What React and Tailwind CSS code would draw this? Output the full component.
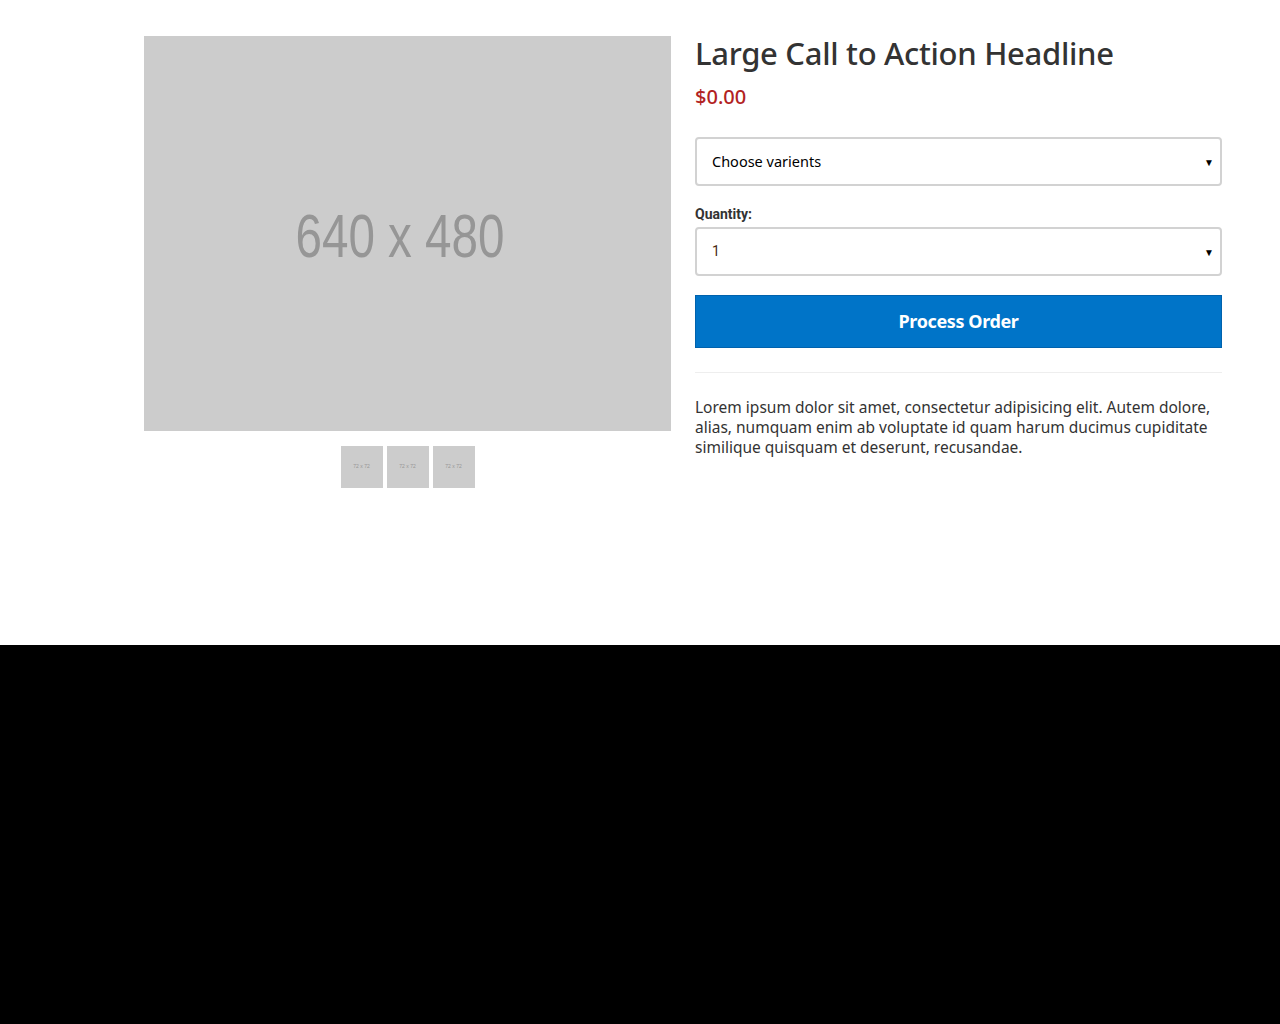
import React from 'react'

const thumbs = [0, 1, 2]

function FakeSelect({ label, className = '' }) {
  return (
    <div className="flex h-[49px] w-full items-center justify-between rounded-[4px] border-2 border-[#d2d2d2] bg-white pl-[15px] pr-[6px]">
      <span className={className}>{label}</span>
      <span className="text-[10px] leading-none text-black">▼</span>
    </div>
  )
}

export default function App() {
  return (
    <div className="min-h-[1024px] bg-black font-['Noto_Sans',sans-serif]">
      <div className="h-[645px] bg-white pt-[36px]">
        <div className="ml-[144px] flex w-[1078px] gap-[24px]">
          <div className="w-[527px]">
            <div className="flex h-[395px] items-center justify-center bg-[#cccccc] pr-[15px] pt-[6px]">
              <span className="inline-block scale-x-[0.78] font-['Liberation_Sans',sans-serif] text-[61px] leading-none text-[#969696]">
                640 x 480
              </span>
            </div>
            <div className="mt-[15px] flex justify-center gap-[4px]">
              {thumbs.map((t) => (
                <div key={t} className="flex h-[42px] w-[42px] items-center justify-center bg-[#cccccc]">
                  <span className="font-['Liberation_Sans',sans-serif] text-[5px] text-[#969696]">72 x 72</span>
                </div>
              ))}
            </div>
          </div>

          <div className="w-[527px]">
            <h1 className="mt-[-4px] text-[31px] font-medium leading-[42px] tracking-[-0.3px] text-[#333333]">
              Large Call to Action Headline
            </h1>
            <p className="mt-[11px] text-[20px] font-medium leading-[24px] text-[#b22222]">$0.00</p>

            <div className="mt-[28px]">
              <FakeSelect label="Choose varients" className="text-[14.5px] text-black" />
            </div>

            <label className="mt-[19px] block font-['Roboto',sans-serif] text-[14px] font-bold leading-[18px] text-[#333333]">
              Quantity:
            </label>
            <div className="mt-[4px]">
              <FakeSelect label="1" className="font-['Roboto',sans-serif] text-[14px] text-[#4a2a12]" />
            </div>

            <button className="mt-[19px] flex h-[53px] w-full items-center justify-center border border-[#0062ad] bg-[#0074c8] text-[18px] font-bold tracking-[-0.4px] text-white">
              Process Order
            </button>

            <hr className="mt-[24px] border-t border-[#eeeeee]" />

            <p className="mt-[24px] text-[15.5px] leading-[20px] text-[#333333]">
              Lorem ipsum dolor sit amet, consectetur adipisicing elit. Autem dolore, alias, numquam enim ab
              voluptate id quam harum ducimus cupiditate similique quisquam et deserunt, recusandae.
            </p>
          </div>
        </div>
      </div>
    </div>
  )
}
